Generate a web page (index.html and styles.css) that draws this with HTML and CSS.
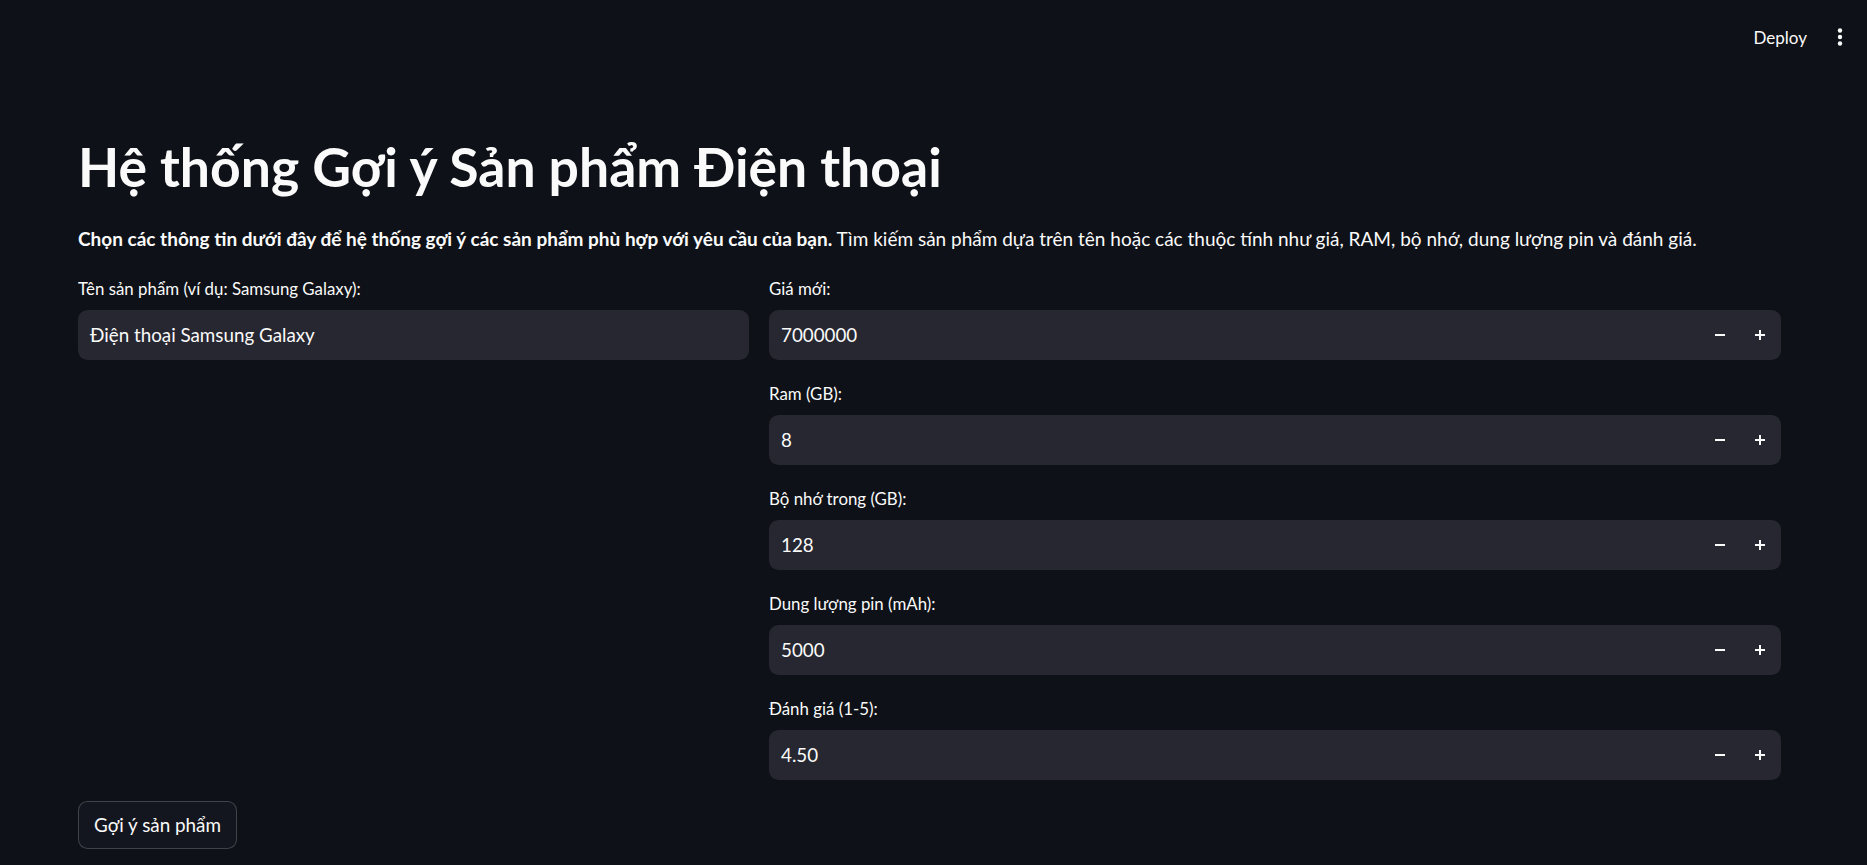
FILE: index.html
```html
<!DOCTYPE html>
<html lang="vi">
<head>
<meta charset="utf-8">
<title>Hệ thống Gợi ý Sản phẩm Điện thoại</title>
<link rel="stylesheet" href="styles.css">
</head>
<body>
<header class="topbar">
  <button class="deploy" type="button">Deploy</button>
  <button class="menu" type="button" aria-label="Menu">
    <svg width="6" height="18" viewBox="0 0 6 18"><circle cx="3" cy="2.5" r="2.2" fill="#fafafa"/><circle cx="3" cy="9" r="2.2" fill="#fafafa"/><circle cx="3" cy="15.5" r="2.2" fill="#fafafa"/></svg>
  </button>
</header>
<main class="main">
  <h1 class="title">Hệ thống Gợi ý Sản phẩm Điện thoại</h1>
  <p class="desc"><strong>Chọn các thông tin dưới đây để hệ thống gợi ý các sản phẩm phù hợp với yêu cầu của bạn.</strong> Tìm kiếm sản phẩm dựa trên tên hoặc các thuộc tính như giá, RAM, bộ nhớ, dung lượng pin và đánh giá.</p>
  <div class="columns">
    <div class="col">
      <div class="field">
        <label class="label">Tên sản phẩm (ví dụ: Samsung Galaxy):</label>
        <div class="input"><span class="value">Điện thoại Samsung Galaxy</span></div>
      </div>
    </div>
    <div class="col">
      <div class="field">
        <label class="label">Giá mới:</label>
        <div class="input number"><span class="value">7000000</span><span class="step"><svg width="10" height="2" viewBox="0 0 10 2"><rect width="10" height="2" fill="#fafafa"/></svg></span><span class="step"><svg width="10" height="10" viewBox="0 0 10 10"><rect y="4" width="10" height="2" fill="#fafafa"/><rect x="4" width="2" height="10" fill="#fafafa"/></svg></span></div>
      </div>
      <div class="field">
        <label class="label">Ram (GB):</label>
        <div class="input number"><span class="value">8</span><span class="step"><svg width="10" height="2" viewBox="0 0 10 2"><rect width="10" height="2" fill="#fafafa"/></svg></span><span class="step"><svg width="10" height="10" viewBox="0 0 10 10"><rect y="4" width="10" height="2" fill="#fafafa"/><rect x="4" width="2" height="10" fill="#fafafa"/></svg></span></div>
      </div>
      <div class="field">
        <label class="label">Bộ nhớ trong (GB):</label>
        <div class="input number"><span class="value">128</span><span class="step"><svg width="10" height="2" viewBox="0 0 10 2"><rect width="10" height="2" fill="#fafafa"/></svg></span><span class="step"><svg width="10" height="10" viewBox="0 0 10 10"><rect y="4" width="10" height="2" fill="#fafafa"/><rect x="4" width="2" height="10" fill="#fafafa"/></svg></span></div>
      </div>
      <div class="field">
        <label class="label">Dung lượng pin (mAh):</label>
        <div class="input number"><span class="value">5000</span><span class="step"><svg width="10" height="2" viewBox="0 0 10 2"><rect width="10" height="2" fill="#fafafa"/></svg></span><span class="step"><svg width="10" height="10" viewBox="0 0 10 10"><rect y="4" width="10" height="2" fill="#fafafa"/><rect x="4" width="2" height="10" fill="#fafafa"/></svg></span></div>
      </div>
      <div class="field">
        <label class="label">Đánh giá (1-5):</label>
        <div class="input number"><span class="value">4.50</span><span class="step"><svg width="10" height="2" viewBox="0 0 10 2"><rect width="10" height="2" fill="#fafafa"/></svg></span><span class="step"><svg width="10" height="10" viewBox="0 0 10 10"><rect y="4" width="10" height="2" fill="#fafafa"/><rect x="4" width="2" height="10" fill="#fafafa"/></svg></span></div>
      </div>
    </div>
  </div>
  <div class="actions">
    <button class="btn" type="button">Gợi ý sản phẩm</button>
  </div>
</main>
</body>
</html>
```
FILE: styles.css
```css
html, body {
  margin: 0;
  padding: 0;
  background: #0e1117;
  color: #fafafa;
  font-family: "Lato", "Noto Sans", sans-serif;
}
body {
  height: 865px;
  overflow: hidden;
}
.topbar {
  height: 74px;
  display: flex;
  align-items: center;
  justify-content: flex-end;
  padding-right: 18px;
  gap: 24px;
}
.deploy {
  background: none;
  border: 0;
  color: #fafafa;
  font-family: inherit;
  font-size: 17px;
  padding: 0;
}
.menu {
  background: none;
  border: 0;
  padding: 0;
  width: 18px;
  height: 24px;
  display: flex;
  align-items: center;
  justify-content: center;
}
.main {
  padding: 60px 86px 0 78px;
  display: flex;
  flex-direction: column;
}
.title {
  margin: 0;
  font-size: 53.5px;
  font-weight: 700;
  line-height: 64px;
}
.desc {
  margin: 26px 0 0;
  font-size: 19px;
  line-height: 30px;
}
.desc strong {
  font-weight: 700;
}
.columns {
  display: grid;
  grid-template-columns: 671fr 1012fr;
  column-gap: 20px;
  margin-top: 21px;
}
.col {
  display: flex;
  flex-direction: column;
  gap: 20.5px;
}
.field {
  display: flex;
  flex-direction: column;
  gap: 6.5px;
}
.label {
  font-size: 16.85px;
  line-height: 28px;
  height: 28px;
}
.input {
  height: 50px;
  box-sizing: border-box;
  background: #262730;
  border-radius: 9.5px;
  display: flex;
  align-items: center;
  padding-left: 12px;
}
.value {
  font-size: 18.8px;
  flex: 1;
}
.number {
  padding-right: 1px;
}
.step {
  width: 40px;
  height: 48px;
  display: flex;
  align-items: center;
  justify-content: center;
}
.actions {
  margin-top: 21px;
  display: flex;
}
.btn {
  height: 48px;
  padding: 0 15px;
  background: #13161e;
  border: 1px solid rgba(250, 250, 250, 0.2);
  border-radius: 9.5px;
  color: #fafafa;
  font-family: inherit;
  font-size: 18.85px;
}
```
